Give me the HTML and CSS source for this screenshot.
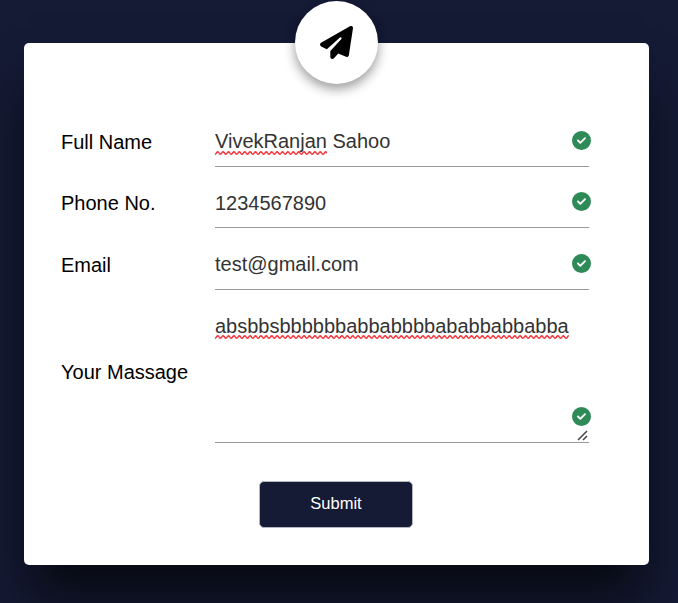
FILE: index.html
```html
<!DOCTYPE html>
<html lang="en">
<head>
<meta charset="utf-8">
<title>Contact form</title>
<link rel="stylesheet" href="styles.css">
</head>
<body>
<svg class="defs" width="0" height="0" aria-hidden="true">
  <defs>
    <pattern id="wave" width="5.4" height="4" patternUnits="userSpaceOnUse">
      <path d="M-1.35 2 Q0 4.4 1.35 2 T4.05 2 T6.75 2" fill="none" stroke="#ee1c25" stroke-width="1.4"/>
    </pattern>
    <symbol id="check" viewBox="0 0 512 512">
      <path d="M256 512A256 256 0 1 0 256 0a256 256 0 1 0 0 512zM369 209L241 337c-9.4 9.4-24.6 9.4-33.9 0l-64-64c-9.4-9.4-9.4-24.6 0-33.9s24.6-9.4 33.9 0l47 47L335 175c9.4-9.4 24.6-9.4 33.9 0s9.4 24.6 0 33.9z"/>
    </symbol>
  </defs>
</svg>
<form class="card">
  <div class="logo">
    <svg viewBox="0 0 512 512"><path d="M498.1 5.6c10.1 7 15.4 19.1 13.5 31.2l-64 416c-1.5 9.7-7.4 18.2-16 23s-18.9 5.4-28 1.6L284 427.7l-68.5 74.1c-8.9 9.7-22.9 12.9-35.2 8.1S160 493.2 160 480V396.4c0-4 1.5-7.8 4.2-10.7L331.8 202.8c5.8-6.3 5.6-16-.4-22s-15.7-6.4-22-.7L106 360.8 17.7 316.6C7.1 311.3 .3 300.7 0 288.9s5.9-22.8 16.1-28.7l448-256c10.7-6.1 23.9-5.5 34 1.4z"/></svg>
  </div>
  <div class="fields">
    <span class="label">Full Name</span>
    <div class="field"><span class="misspelled">VivekRanjan<svg class="squiggle"><rect width="100%" height="4" fill="url(#wave)"/></svg></span> Sahoo<svg class="check"><use href="#check"/></svg></div>
    <span class="label">Phone No.</span>
    <div class="field low">1234567890<svg class="check"><use href="#check"/></svg></div>
    <span class="label email">Email</span>
    <div class="field low email">test@gmail.com<svg class="check"><use href="#check"/></svg></div>
    <span class="label tall">Your Massage</span>
    <div class="field low message"><span class="misspelled">absbbsbbbbbbabbabbbbababbabbabba<svg class="squiggle"><rect width="100%" height="4" fill="url(#wave)"/></svg></span><svg class="check"><use href="#check"/></svg>
      <svg class="grip" viewBox="0 0 11 11"><path d="M1 10 10 1M6 10 10 6" fill="none" stroke="#444" stroke-width="1.5"/></svg></div>
  </div>
  <button class="submit" type="button">Submit</button>
</form>
</body>
</html>
```
FILE: styles.css
```css
* { box-sizing: border-box; }
body {
  margin: 0;
  height: 603px;
  padding: 43px 29px 0 24px;
  overflow: hidden;
  background: #151a35;
  font-family: "Liberation Sans", Arial, sans-serif;
  font-size: 20px;
  color: #000;
}
.defs { position: absolute; }
.card {
  position: relative;
  height: 522px;
  padding: 79px 60px 0 37px;
  background: #fff;
  border-radius: 5px;
  box-shadow: 0 40px 50px -6px rgba(0, 3, 0, 0.68);
}
.logo {
  position: absolute;
  top: -42px;
  left: 271px;
  width: 83px;
  height: 83px;
  display: flex;
  align-items: center;
  justify-content: center;
  background: #fff;
  border-radius: 50%;
  box-shadow: 0 5px 12px rgba(0, 0, 0, 0.4);
}
.logo svg { width: 33px; height: 33px; }
.fields {
  display: grid;
  grid-template-columns: 154px 374px;
  grid-template-rows: 45px 45px 46px 137px;
  row-gap: 16px;
}
.label { line-height: 40px; }
.label.email { line-height: 42px; }
.label.tall { line-height: 132px; }
.field {
  position: relative;
  line-height: 38px;
  color: #333;
  border-bottom: 1px solid #999;
}
.field.low { line-height: 40px; }
.misspelled { position: relative; display: inline-block; }
.squiggle {
  position: absolute;
  left: 0;
  bottom: 5px;
  width: 100%;
  height: 4px;
}
.low .squiggle { bottom: 7px; }
.check {
  position: absolute;
  top: 9px;
  right: -2px;
  width: 19px;
  height: 19px;
  fill: #2e8b57;
}
.email .check { top: 10px; }
.message .check { top: auto; bottom: 16px; }
.grip {
  position: absolute;
  right: 1px;
  bottom: 1px;
  width: 11px;
  height: 11px;
}
.submit {
  display: block;
  width: 154px;
  height: 47px;
  margin: 38px 0 0 198px;
  padding: 0 0 2px;
  background: #151a35;
  border: 1px solid #b4b5c0;
  border-radius: 5px;
  color: #fff;
  font: 16.5px "Liberation Sans", Arial, sans-serif;
}
```
